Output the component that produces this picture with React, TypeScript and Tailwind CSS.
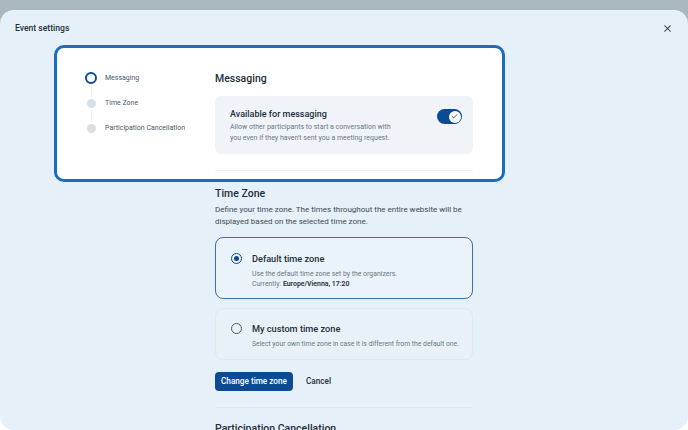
import React from 'react';
import { X, Check } from 'lucide-react';

const steps = [
  { label: 'Messaging', active: true },
  { label: 'Time Zone', active: false },
  { label: 'Participation Cancellation', active: false },
];

const App: React.FC = () => {
  return (
    <div
      className="h-[430px] w-[688px] overflow-hidden bg-[linear-gradient(to_bottom,#aab9c1_50%,#ffffff_50%)] pt-[10px]"
      style={{ fontFamily: 'Roboto, "Noto Sans", sans-serif' }}
    >
      <div className="h-[420px] overflow-hidden rounded-[14px] bg-[#e6f0f8]">
        <div className="flex items-center justify-between px-[15px] pt-[12px]">
          <h1 className="text-[8.6px] font-medium leading-[12px] text-[#1d3040]">Event settings</h1>
          <X className="h-[11px] w-[11px] text-[#1d3040]" strokeWidth={2.2} />
        </div>

        <div className="ml-[54px] mt-[11px] flex w-[451px] rounded-[10px] border-[3px] border-[#1a6cbd] bg-white">
          <div className="w-[158px] pl-[28px] pt-[24px]">
            {steps.map((s, i) => (
              <div key={s.label}>
                <div className="flex h-[12px] items-center gap-[8px]">
                  {s.active ? (
                    <span className="h-[12px] w-[12px] shrink-0 rounded-full border-[2.5px] border-[#0d4a94]" />
                  ) : (
                    <span className="mx-[1.5px] h-[9px] w-[9px] shrink-0 rounded-full bg-[#d9dfe3]" />
                  )}
                  <span className="text-[7px] leading-[12px] text-[#4a5966]">{s.label}</span>
                </div>
                {i < steps.length - 1 && (
                  <div className="ml-[5.5px] h-[13px] w-px bg-[#eef1f3]" />
                )}
              </div>
            ))}
          </div>
          <div className="w-[258px] pt-[23px]">
            <h2 className="text-[10.5px] font-medium leading-[15px] text-[#1d2e3b]">Messaging</h2>
            <div className="mt-[10px] flex items-start justify-between rounded-[6px] bg-[#f0f4f9] pb-[10px] pl-[15px] pr-[11px] pt-[12px]">
              <div>
                <div className="text-[9px] font-medium leading-[12px] text-[#1d2e3b]">Available for messaging</div>
                <p className="mt-[1.5px] w-[172px] text-[7px] leading-[11px] text-[#6a7884]">
                  Allow other participants to start a conversation with you even if they haven't sent you a meeting request.
                </p>
              </div>
              <div className="mt-[1px] flex h-[15px] w-[25px] items-center justify-end rounded-full bg-[#0d4a94] pr-[1.5px]">
                <span className="flex h-[12px] w-[12px] items-center justify-center rounded-full bg-white">
                  <Check className="h-[7px] w-[7px] text-[#0d4a94]" strokeWidth={3} />
                </span>
              </div>
            </div>
            <div className="mb-[8px] mt-[16px] h-px bg-[#eef1f4]" />
          </div>
        </div>

        <div className="ml-[215px] w-[258px]">
          <h2 className="mt-[4px] text-[10.5px] font-medium leading-[15px] text-[#1d2e3b]">Time Zone</h2>
          <p className="mt-[3px] text-[8px] leading-[12px] text-[#3b4a57]">
            Define your time zone. The times throughout the entire website will be displayed based on the selected time zone.
          </p>

          <div className="mt-[9px] flex gap-[10px] rounded-[8px] border-[1.5px] border-[#3f6ea6] bg-[#eaf2fa] px-[15px] pb-[9px] pt-[15px]">
            <span className="flex h-[11px] w-[11px] shrink-0 items-center justify-center rounded-full border-[1.5px] border-[#0d4a94]">
              <span className="h-[5px] w-[5px] rounded-full bg-[#0d4a94]" />
            </span>
            <div>
              <div className="text-[9.2px] font-medium leading-[12px] text-[#1d2e3b]">Default time zone</div>
              <p className="mt-[4px] text-[6.9px] leading-[10px] text-[#6a7884]">
                Use the default time zone set by the organizers.
                <br />
                Currently: <span className="font-semibold text-[#1d2e3b]">Europe/Vienna, 17:20</span>
              </p>
            </div>
          </div>

          <div className="mt-[9px] flex gap-[10px] rounded-[8px] border border-[#dbe7f1] bg-[#e9f1f8] px-[15px] pb-[10px] pt-[14px]">
            <span className="h-[11px] w-[11px] shrink-0 rounded-full border-[1.5px] border-[#4a5966]" />
            <div>
              <div className="text-[9.2px] font-medium leading-[12px] text-[#1d2e3b]">My custom time zone</div>
              <p className="mt-[4px] whitespace-nowrap text-[6.8px] leading-[10px] text-[#6a7884]">
                Select your own time zone in case it is different from the default one.
              </p>
            </div>
          </div>

          <div className="mt-[12px] flex items-center gap-[13px]">
            <button className="h-[19px] rounded-[4px] bg-[#0d4a94] px-[6px] text-[8.2px] font-medium text-white">
              Change time zone
            </button>
            <button className="text-[8.2px] font-medium text-[#1d2e3b]">Cancel</button>
          </div>

          <div className="mt-[16px] h-px bg-[#dde8f2]" />
          <h2 className="mt-[13px] text-[10.5px] font-medium leading-[15px] text-[#1d2e3b]">Participation Cancellation</h2>
        </div>
      </div>
    </div>
  );
};

export default App;
